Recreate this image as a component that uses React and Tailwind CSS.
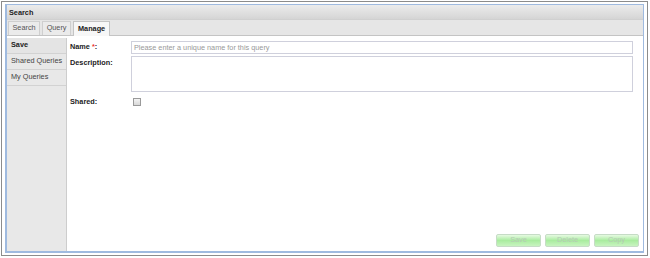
import { useState } from "react";

const TABS = ["Search", "Query", "Manage"];
const MENU = ["Save", "Shared Queries", "My Queries"];

export default function App() {
  const [tab, setTab] = useState("Manage");
  const [menu, setMenu] = useState("Save");
  const [shared, setShared] = useState(false);

  return (
    <div className="w-[650px] h-[258px] bg-white pl-[1px] pt-[1px] text-[7.3px] text-[#222]" style={{ fontFamily: '"Liberation Sans", Arial, sans-serif' }}>
      <div className="w-[647px] h-[255px] border border-[#8c8c8c] p-[2px] pl-[3px] pr-[3px]">
        <div className="h-full flex flex-col border border-l-2 border-b-2 border-[#9fbadf] bg-white">

          {/* ===== HEADER ===== */}
          <div className="h-[15px] flex items-center pt-[2px] px-[2px] font-bold bg-gradient-to-b from-[#ececec] to-[#d5d5d5] border-b border-[#d0d0d0]">
            Search
          </div>

          {/* ===== TABS ===== */}
          <div className="h-[16px] flex items-end gap-[2px] pl-[1px] bg-[#e6e6e6] border-b border-[#c4c4c4]">
            {TABS.map(t => (
              <button
                key={t}
                onClick={() => setTab(t)}
                className={
                  t === tab
                    ? "h-[15px] px-[4px] -mb-[1px] bg-[#f7f7f7] border border-b-0 border-[#c4c4c4] font-bold text-[#222]"
                    : "h-[14px] px-[3.5px] bg-[#ebebeb] border border-b-0 border-[#cfcfcf] text-[#555]"
                }
              >
                {t}
              </button>
            ))}
          </div>

          {/* ===== BODY ===== */}
          <div className="flex-1 flex pt-[2px]">
            <div className="w-[60px] bg-[#e8e8e8] border-r border-[#cdcdcd] flex flex-col">
              {MENU.map(m => (
                <button
                  key={m}
                  onClick={() => setMenu(m)}
                  className={
                    "h-[16px] text-left pl-[4px] border-b border-[#d2d2d2] " +
                    (m === menu ? "font-bold text-[#222] bg-[#e4e4e4]" : "text-[#444]")
                  }
                >
                  {m}
                </button>
              ))}
            </div>

            <div className="flex-1 flex flex-col pl-[3px] pr-[4px] pt-[3px] pb-[4px]">
              <div className="flex flex-col pr-[6px]">
                <div className="flex items-center">
                  <label className="w-[61px] font-bold">Name <span className="text-[#e33]">*</span>:</label>
                  <input
                    placeholder="Please enter a unique name for this query"
                    className="flex-1 h-[13px] px-[2px] border border-[#cfd0dc] outline-none placeholder:text-[#999]"
                  />
                </div>

                <div className="flex mt-[2px]">
                  <label className="w-[61px] font-bold pt-[2px]">Description:</label>
                  <textarea className="flex-1 h-[36px] border border-[#cfd0dc] outline-none resize-none" />
                </div>

                <div className="flex items-center mt-[5px]">
                  <label className="w-[63px] font-bold">Shared:</label>
                  <input
                    type="checkbox"
                    checked={shared}
                    onChange={() => setShared(!shared)}
                    className="w-[8px] h-[8px] m-0 appearance-none border border-[#9a9a9a] bg-gradient-to-b from-[#f4f4f4] to-[#d8d8d8]"
                  />
                </div>
              </div>

              <div className="flex-1" />

              <div className="flex justify-end gap-[4px]">
                {["Save", "Delete", "Copy"].map(b => (
                  <button
                    key={b}
                    disabled
                    className="w-[45px] h-[13px] rounded-[2px] border border-[#c6dcc6] bg-gradient-to-b from-[#e6fae2] via-[#a9ec9f] to-[#c8f4c0] text-[#b5c9b5]"
                  >
                    {b}
                  </button>
                ))}
              </div>
            </div>
          </div>
        </div>
      </div>
    </div>
  );
}
